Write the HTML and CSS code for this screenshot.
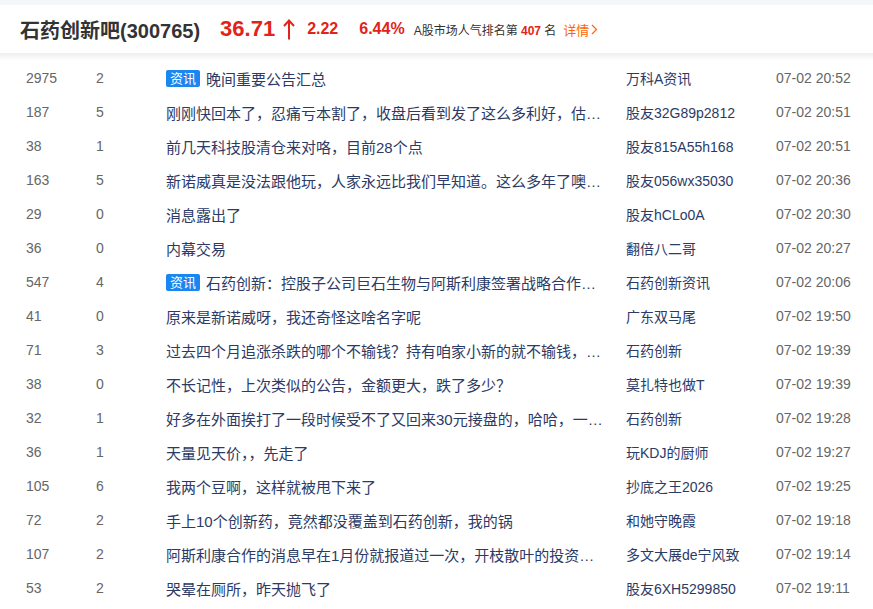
FILE: index.html
```html
<!DOCTYPE html>
<html lang="zh-CN">
<head>
    <meta charset="UTF-8">
    <title>石药创新吧</title>
    <link rel="stylesheet" href="styles.css">
</head>
<body>
    <div class="topline"></div>
    <div class="header">
        <h1 class="bar-name">石药创新吧(300765)</h1>
        <span class="price">36.71</span>
        <svg class="arrow" width="12" height="22" viewBox="0 0 12 22">
            <path d="M6 21.5V2.5M1 8L6 2.5L11 8" fill="none" stroke="#e2231a" stroke-width="2"/>
        </svg>
        <span class="change">2.22</span>
        <span class="change pct">6.44%</span>
        <span class="rank">A股市场人气排名第 <b>407</b> 名</span>
        <a class="detail">详情<svg width="7" height="11" viewBox="0 0 7 11"><path d="M1 1L5.5 5.5L1 10" fill="none" stroke="#ff6600" stroke-width="1.2"/></svg></a>
    </div>
    <div class="shade"></div>

    <div class="list">
        <div class="row"><span class="read">2975</span><span class="reply">2</span><span class="title"><em class="tag">资讯</em>晚间重要公告汇总</span><span class="author">万科A资讯</span><span class="time">07-02 20:52</span></div>
        <div class="row"><span class="read">187</span><span class="reply">5</span><span class="title">刚刚快回本了，忍痛亏本割了，收盘后看到发了这么多利好，估…</span><span class="author">股友32G89p2812</span><span class="time">07-02 20:51</span></div>
        <div class="row"><span class="read">38</span><span class="reply">1</span><span class="title">前几天科技股清仓来对咯，目前28个点</span><span class="author">股友815A55h168</span><span class="time">07-02 20:51</span></div>
        <div class="row"><span class="read">163</span><span class="reply">5</span><span class="title">新诺威真是没法跟他玩，人家永远比我们早知道。这么多年了噢…</span><span class="author">股友056wx35030</span><span class="time">07-02 20:36</span></div>
        <div class="row"><span class="read">29</span><span class="reply">0</span><span class="title">消息露出了</span><span class="author">股友hCLo0A</span><span class="time">07-02 20:30</span></div>
        <div class="row"><span class="read">36</span><span class="reply">0</span><span class="title">内幕交易</span><span class="author">翻倍八二哥</span><span class="time">07-02 20:27</span></div>
        <div class="row"><span class="read">547</span><span class="reply">4</span><span class="title"><em class="tag">资讯</em>石药创新：控股子公司巨石生物与阿斯利康签署战略合作…</span><span class="author">石药创新资讯</span><span class="time">07-02 20:06</span></div>
        <div class="row"><span class="read">41</span><span class="reply">0</span><span class="title">原来是新诺威呀，我还奇怪这啥名字呢</span><span class="author">广东双马尾</span><span class="time">07-02 19:50</span></div>
        <div class="row"><span class="read">71</span><span class="reply">3</span><span class="title">过去四个月追涨杀跌的哪个不输钱？持有咱家小新的就不输钱，…</span><span class="author">石药创新</span><span class="time">07-02 19:39</span></div>
        <div class="row"><span class="read">38</span><span class="reply">0</span><span class="title">不长记性，上次类似的公告，金额更大，跌了多少？</span><span class="author">莫扎特也做T</span><span class="time">07-02 19:39</span></div>
        <div class="row"><span class="read">32</span><span class="reply">1</span><span class="title">好多在外面挨打了一段时候受不了又回来30元接盘的，哈哈，一…</span><span class="author">石药创新</span><span class="time">07-02 19:28</span></div>
        <div class="row"><span class="read">36</span><span class="reply">1</span><span class="title">天量见天价，，先走了</span><span class="author">玩KDJ的厨师</span><span class="time">07-02 19:27</span></div>
        <div class="row"><span class="read">105</span><span class="reply">6</span><span class="title">我两个豆啊，这样就被甩下来了</span><span class="author">抄底之王2026</span><span class="time">07-02 19:25</span></div>
        <div class="row"><span class="read">72</span><span class="reply">2</span><span class="title">手上10个创新药，竟然都没覆盖到石药创新，我的锅</span><span class="author">和她守晚霞</span><span class="time">07-02 19:18</span></div>
        <div class="row"><span class="read">107</span><span class="reply">2</span><span class="title">阿斯利康合作的消息早在1月份就报道过一次，开枝散叶的投资…</span><span class="author">多文大展de宁风致</span><span class="time">07-02 19:14</span></div>
        <div class="row"><span class="read">53</span><span class="reply">2</span><span class="title">哭晕在厕所，昨天抛飞了</span><span class="author">股友6XH5299850</span><span class="time">07-02 19:11</span></div>
    </div>
</body>
</html>
```

FILE: styles.css
```css
body {
    margin: 0;
    background: #fff;
    font-family: "Liberation Sans", "Noto Sans CJK SC", sans-serif;
    overflow: hidden;
}

.topline {
    height: 5px;
    background: #f5f6f8;
}

.header {
    height: 48px;
    display: flex;
    align-items: center;
    padding-left: 20px;
    background: #fff;
}

.bar-name {
    margin: 0 20px 0 0;
    font-size: 20px;
    font-weight: bold;
    color: #333;
}

.price {
    font-size: 22px;
    font-weight: bold;
    color: #e2231a;
}

.arrow {
    margin: 0 12px 0 8px;
}

.change {
    font-size: 16px;
    font-weight: bold;
    color: #e2231a;
    margin-right: 21px;
}

.change.pct {
    margin-right: 9px;
}

.rank {
    font-size: 12px;
    color: #333;
}

.rank b {
    color: #e2231a;
}

.detail {
    margin-left: 7px;
    font-size: 13px;
    color: #ff6600;
    display: flex;
    align-items: center;
}

.detail svg {
    margin-left: 2px;
}

.shade {
    height: 8px;
    background: linear-gradient(#efefef, #fff);
}

.list {
    padding-left: 26px;
}

.row {
    height: 34px;
    display: grid;
    grid-template-columns: 70px 70px 460px 150px auto;
    align-items: center;
    white-space: nowrap;
}

.read,
.reply,
.time {
    font-size: 14px;
    color: #666;
}

.title {
    font-size: 15px;
    color: #2c3a66;
    display: flex;
    align-items: center;
    overflow: hidden;
}

.tag {
    font-style: normal;
    font-size: 13px;
    line-height: 17px;
    height: 17px;
    padding: 0 4px;
    margin-right: 6px;
    color: #fff;
    background: #1a86f0;
    border-radius: 2px;
}

.author {
    font-size: 14px;
    color: #2c3a66;
}
```
